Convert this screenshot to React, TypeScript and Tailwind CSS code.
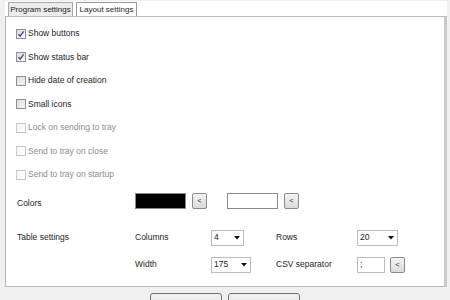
import React from 'react';

type CheckProps = {
  label: string;
  checked?: boolean;
  disabled?: boolean;
};

const Check: React.FC<CheckProps> = ({ label, checked, disabled }) => (
  <div className="flex h-[23.5px] items-center">
    <span
      className={`flex h-[10px] w-[10px] items-center justify-center border bg-gradient-to-br ${
        disabled ? 'border-[#c8c8c8] from-[#f6f6f6] to-white' : 'border-[#8f8f8f] from-[#dcdcdc] to-[#f8f8f8]'
      }`}
    >
      {checked && (
        <svg width="8" height="8" viewBox="0 0 8 8">
          <path d="M1.5 4.2 L3.2 6.2 L6.6 1.4" fill="none" stroke="#3b4f86" strokeWidth="1.4" />
        </svg>
      )}
    </span>
    <span className={`ml-[2px] ${disabled ? 'text-[#8d8d8d]' : 'text-[#1e1e1e]'}`}>{label}</span>
  </div>
);

const SmallButton: React.FC = () => (
  <button className="flex h-[16px] w-[15px] items-center justify-center rounded-[2px] border border-[#8a8a8a] bg-gradient-to-b from-[#f4f4f4] to-[#dadada] text-[7px] leading-none text-[#222]">
    &lt;
  </button>
);

const Select: React.FC<{ value: string; width: string }> = ({ value, width }) => (
  <div className={`flex h-[16px] items-center justify-between border border-[#bcbcbc] bg-white pl-[2px] pr-[3px] ${width}`}>
    <span>{value}</span>
    <svg width="6" height="4" viewBox="0 0 6 4">
      <path d="M0 0 H6 L3 3.5 Z" fill="#111" />
    </svg>
  </div>
);

const App: React.FC = () => {
  return (
    <div
      className="flex h-[300px] w-[450px] flex-col overflow-hidden bg-[#f0f0f0] text-[8.5px] text-[#1e1e1e]"
      style={{ fontFamily: '"Liberation Sans", Arial, sans-serif' }}
    >
      <div className="flex flex-1 flex-col pl-[5px] pr-[3px] pt-[1px]">
        <div className="flex h-[15px] items-end bg-white">
          <div className="ml-[3px] flex h-[14px] w-[65px] items-center justify-center border border-b-0 border-[#a8a8a8] bg-[#ececec] text-[8px] text-[#222]">
            Program settings
          </div>
          <div className="-mb-px ml-[3px] flex h-[15px] w-[61px] items-center justify-center border border-b-0 border-[#9a9a9a] bg-white text-[8px]">
            Layout settings
          </div>
        </div>
        <div className="flex h-[271px] flex-col border border-r-[3px] border-[#b9b9b9] border-r-[#c9c9c9] bg-white pl-[10px] pt-[5px]">
          <Check label="Show buttons" checked />
          <Check label="Show status bar" checked />
          <Check label="Hide date of creation" />
          <Check label="Small icons" />
          <Check label="Lock on sending to tray" disabled />
          <Check label="Send to tray on close" disabled />
          <Check label="Send to tray on startup" disabled />

          <div className="mt-[6px] flex h-[16px] items-center">
            <span className="w-[119px] pl-[1px] pt-[6px]">Colors</span>
            <div className="h-[16px] w-[51px] border border-[#8a8a8a] bg-black" />
            <div className="ml-[6px]">
              <SmallButton />
            </div>
            <div className="ml-[20px] h-[16px] w-[51px] border border-[#8a8a8a] bg-white" />
            <div className="ml-[6px]">
              <SmallButton />
            </div>
          </div>

          <div className="mt-[21px] grid grid-cols-[119px_76px_65px_81px_auto] items-center gap-y-[11px]">
            <span className="pl-[1px]">Table settings</span>
            <span>Columns</span>
            <Select value="4" width="w-[33px]" />
            <span>Rows</span>
            <Select value="20" width="w-[41px]" />

            <span />
            <span>Width</span>
            <Select value="175" width="w-[40px]" />
            <span>CSV separator</span>
            <div className="flex items-center">
              <div className="flex h-[16px] w-[28px] items-center border border-[#bcbcbc] bg-white pl-[2px]">;</div>
              <div className="ml-[5px]">
                <SmallButton />
              </div>
            </div>
          </div>
        </div>
      </div>
      <div className="flex h-[13px] justify-center gap-[6px] pt-[6px]">
        <button className="h-[22px] w-[72px] rounded-[3px] border border-[#707070] bg-gradient-to-b from-[#f2f2f2] to-[#dddddd] pt-[2px] text-[8.5px] leading-none">
          OK
        </button>
        <button className="h-[22px] w-[72px] rounded-[3px] border border-[#707070] bg-gradient-to-b from-[#f2f2f2] to-[#dddddd] pt-[2px] text-[8.5px] leading-none">
          Cancel
        </button>
      </div>
    </div>
  );
};

export default App;
